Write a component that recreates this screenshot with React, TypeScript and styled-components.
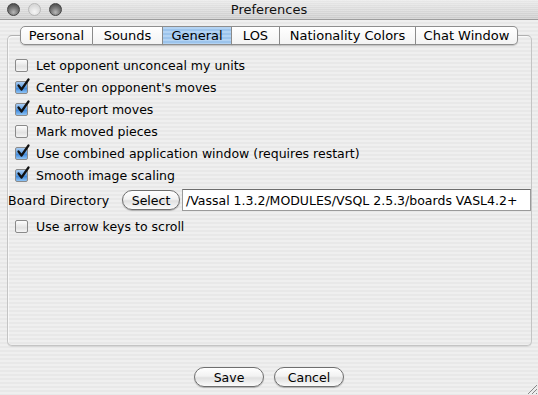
import React, { FC } from "react"
import styled, { createGlobalStyle, css } from "styled-components"

const GlobalStyle = createGlobalStyle`
  html, body {
    margin: 0;
    padding: 0;
  }
  body {
    font-family: "DejaVu Sans", "Liberation Sans", sans-serif;
    font-size: 12px;
    color: #000;
  }
`

const stripes = css`
  background-color: #ededed;
  background-image: repeating-linear-gradient(
    to bottom,
    #efefef 0px,
    #efefef 2px,
    #e8e8e8 2px,
    #e8e8e8 4px
  );
`

// tab widths measured off the original window
const tabs = [
  { label: "Personal", width: 73 },
  { label: "Sounds", width: 70 },
  { label: "General", width: 69 },
  { label: "LOS", width: 48 },
  { label: "Nationality Colors", width: 136 },
  { label: "Chat Window", width: 102 },
]

const options = [
  { label: "Let opponent unconceal my units", checked: false },
  { label: "Center on opponent's moves", checked: true },
  { label: "Auto-report moves", checked: true },
  { label: "Mark moved pieces", checked: false },
  { label: "Use combined application window (requires restart)", checked: true },
  { label: "Smooth image scaling", checked: true },
]

const Check: FC<{ checked: boolean }> = ({ checked }) => (
  <CheckBox $checked={checked}>
    {checked && (
      <svg width="14" height="14" viewBox="0 0 14 14">
        <path
          d="M2.5 7.5 L5.5 11.5 L12.5 1.5"
          fill="none"
          stroke="#111"
          strokeWidth="2.2"
          strokeLinecap="round"
          strokeLinejoin="round"
        />
      </svg>
    )}
  </CheckBox>
)

const CheckRow: FC<{ label: string; checked: boolean }> = ({ label, checked }) => (
  <Row>
    <Check checked={checked} />
    <span>{label}</span>
  </Row>
)

const App: FC = () => {
  return (
    <>
      <GlobalStyle />
      <Window>
        <TitleBar>
          <Lights>
            <Light $dim={false} />
            <Light $dim />
            <Light $dim={false} />
          </Lights>
          <Title>Preferences</Title>
        </TitleBar>
        <Body>
          <TabStrip>
            {tabs.map((t, i) => (
              <Tab
                key={t.label}
                $width={t.width}
                $active={t.label === "General"}
                $first={i === 0}
                $last={i === tabs.length - 1}
              >
                {t.label}
              </Tab>
            ))}
          </TabStrip>
          <Panel>
            {options.map((o) => (
              <CheckRow key={o.label} label={o.label} checked={o.checked} />
            ))}
            <DirRow>
              <DirLabel>Board Directory</DirLabel>
              <PillButton $width={58}>Select</PillButton>
              <PathField>/Vassal 1.3.2/MODULES/VSQL 2.5.3/boards VASL4.2+</PathField>
            </DirRow>
            <CheckRow label="Use arrow keys to scroll" checked={false} />
          </Panel>
          <Buttons>
            <PillButton $width={70}>Save</PillButton>
            <PillButton $width={70}>Cancel</PillButton>
          </Buttons>
          <Grip>
            <svg width="11" height="11" viewBox="0 0 11 11">
              <path d="M10 1 L1 10 M10 5 L5 10 M10 9 L9 10" stroke="#888" strokeWidth="1" />
            </svg>
          </Grip>
        </Body>
      </Window>
    </>
  )
}

const Window = styled.div`
  width: 538px;
  height: 395px;
  display: flex;
  flex-direction: column;
  overflow: hidden;
  ${stripes};
`

const TitleBar = styled.div`
  height: 19px;
  flex: none;
  display: flex;
  align-items: center;
  position: relative;
  border-bottom: 1px solid #9c9c9c;
  background-color: #d8d8d8;
  background-image: repeating-linear-gradient(
      to bottom,
      rgba(255, 255, 255, 0.25) 0px,
      rgba(255, 255, 255, 0.25) 1px,
      rgba(0, 0, 0, 0) 1px,
      rgba(0, 0, 0, 0) 2px
    ),
    linear-gradient(to bottom, #e9e9e9, #cbcbcb);
`

const Lights = styled.div`
  display: flex;
  gap: 8px;
  padding-left: 7px;
`

const Light = styled.div<{ $dim: boolean }>`
  width: 13px;
  height: 13px;
  border-radius: 50%;
  box-sizing: border-box;
  ${({ $dim }) =>
    $dim
      ? css`
          border: 1px solid #b8b8b8;
          background: radial-gradient(circle at 50% 70%, #f6f6f6, #d8d8d8 70%);
        `
      : css`
          border: 1px solid #444;
          background: radial-gradient(circle at 50% 75%, #b8b8b8 0%, #7a7a7a 45%, #3c3c3c 100%);
        `}
`

const Title = styled.div`
  position: absolute;
  left: 0;
  right: 0;
  text-align: center;
  font-size: 13px;
  color: #111;
  pointer-events: none;
`

const Body = styled.div`
  flex: 1;
  display: flex;
  flex-direction: column;
  padding: 6px 6px 0 7px;
  position: relative;
`

const TabStrip = styled.div`
  display: flex;
  margin-left: 13px;
  position: relative;
  z-index: 1;
  align-self: flex-start;
`

const Tab = styled.div<{ $width: number; $active: boolean; $first: boolean; $last: boolean }>`
  width: ${({ $width }) => $width}px;
  box-sizing: border-box;
  height: 19px;
  line-height: 17px;
  text-align: center;
  white-space: nowrap;
  font-size: 13px;
  border: 1px solid #8e8e8e;
  border-left: ${({ $first }) => ($first ? "1px solid #8e8e8e" : "none")};
  border-radius: ${({ $first, $last }) => ($first ? "5px 0 0 5px" : $last ? "0 5px 5px 0" : "0")};
  box-shadow: 0 1px 1px rgba(0, 0, 0, 0.18);
  background: ${({ $active }) =>
    $active
      ? "repeating-linear-gradient(to bottom, #b3d3f3 0px, #b3d3f3 2px, #9cc4ec 2px, #9cc4ec 4px)"
      : "linear-gradient(to bottom, #ffffff, #f3f3f3)"};
`

const Panel = styled.div`
  margin-top: -10px;
  height: 311px;
  box-sizing: border-box;
  border: 1px solid #c4c4c4;
  border-top-color: #b0b0b0;
  border-radius: 5px;
  padding: 18px 0 0 1px;
  display: flex;
  flex-direction: column;
  box-shadow: inset 1px 1px 0 rgba(255, 255, 255, 0.6), 0 1px 0 #d8d8d8;
`

const Row = styled.div`
  height: 22px;
  display: flex;
  align-items: center;
  gap: 8px;
  padding-left: 6px;
  font-size: 12.5px;
  white-space: nowrap;
`

const CheckBox = styled.div<{ $checked: boolean }>`
  width: 13px;
  height: 13px;
  box-sizing: border-box;
  border: 1px solid #8a8a8a;
  border-radius: 2px;
  position: relative;
  background: ${({ $checked }) =>
    $checked
      ? "linear-gradient(to bottom, #a9cdf4 0%, #5a9be0 50%, #3d86d8 55%, #8ec4f6 100%)"
      : "linear-gradient(to bottom, #fdfdfd, #e2e2e2 60%, #f4f4f4)"};

  > svg {
    position: absolute;
    left: 0;
    top: -4px;
  }
`

const DirRow = styled.div`
  display: flex;
  align-items: center;
  margin: 3px 0 4px -1px;
  height: 22px;
`

const DirLabel = styled.span`
  width: 114px;
  flex: none;
  font-size: 12.5px;
  white-space: nowrap;
  letter-spacing: 0.2px;
`

const PillButton = styled.div<{ $width: number }>`
  width: ${({ $width }) => $width}px;
  flex: none;
  height: 20px;
  box-sizing: border-box;
  border: 1px solid #6f6f6f;
  border-radius: 10px;
  display: flex;
  align-items: center;
  justify-content: center;
  font-size: 12.5px;
  background: linear-gradient(to bottom, #ffffff 0%, #f2f2f2 45%, #e0e0e0 55%, #fbfbfb 100%);
  box-shadow: 0 1px 1px rgba(0, 0, 0, 0.25);
`

const PathField = styled.div`
  flex: 1;
  height: 22px;
  margin-left: 2px;
  box-sizing: border-box;
  border: 1px solid #9a9a9a;
  border-top-color: #6e6e6e;
  background: #fff;
  display: flex;
  align-items: center;
  padding-left: 3px;
  font-size: 12.5px;
  white-space: nowrap;
  overflow: hidden;
`

const Buttons = styled.div`
  display: flex;
  justify-content: center;
  gap: 10px;
  margin-top: 21px;
  padding-right: 1px;
`

const Grip = styled.div`
  position: absolute;
  right: 0;
  bottom: 0;
  width: 11px;
  height: 11px;
  display: flex;
`

export default App
